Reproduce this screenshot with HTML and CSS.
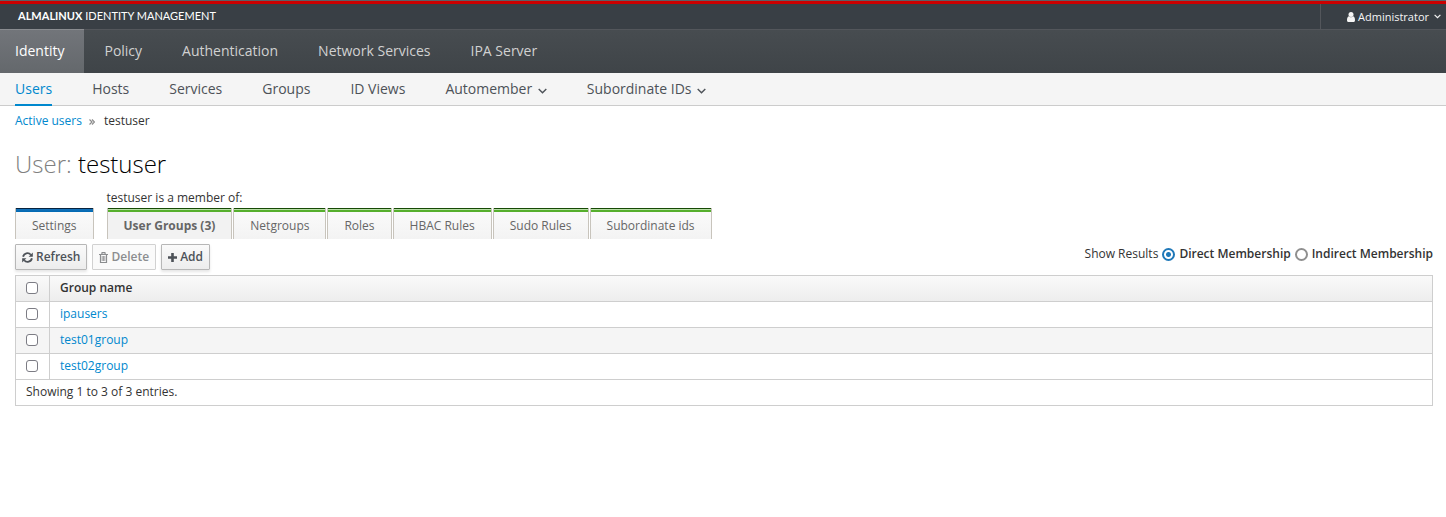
FILE: index.html
```html
<!DOCTYPE html>
<html lang="en">
<head>
    <meta charset="UTF-8">
    <meta name="viewport" content="width=device-width, initial-scale=1.0">
    <title>Identity Management</title>
    <link rel="stylesheet" href="styles.css">
</head>
<body>
    <header class="navbar">
        <div class="navbar-header">
            <a class="brand" href="#"><b>ALMALINUX</b> IDENTITY MANAGEMENT</a>
            <button type="button" class="user-menu">
                <svg class="user-icon" viewBox="0 0 8 10" width="8" height="10"><circle cx="4" cy="2.600" r="2.500" fill="currentColor"/><path d="M1.800 4.300C.5 4.800 0 6.300 0 8.200 0 9.300.6 10 1.500 10h5C7.400 10 8 9.300 8 8.200c0-1.900-.5-3.400-1.800-3.900-1.200 1.200-3.200 1.200-4.400 0z" fill="currentColor"/></svg>
                <span>Administrator</span>
                <svg class="user-caret" viewBox="0 0 7 5" width="7" height="5"><path d="M.6.8l2.900 2.900L6.400.8" fill="none" stroke="currentColor" stroke-width="1.200"/></svg>
            </button>
        </div>
        <nav class="nav-primary">
            <a class="active" href="#">Identity</a>
            <a href="#">Policy</a>
            <a href="#">Authentication</a>
            <a href="#">Network Services</a>
            <a href="#">IPA Server</a>
        </nav>
        <nav class="nav-secondary">
            <a class="active" href="#">Users</a>
            <a href="#">Hosts</a>
            <a href="#">Services</a>
            <a href="#">Groups</a>
            <a href="#">ID Views</a>
            <a href="#">Automember <svg class="caret" viewBox="0 0 9 6" width="9" height="6"><path d="M.7.9l3.800 3.800L8.300.9" fill="none" stroke="currentColor" stroke-width="1.400"/></svg></a>
            <a href="#">Subordinate IDs <svg class="caret" viewBox="0 0 9 6" width="9" height="6"><path d="M.7.9l3.800 3.800L8.300.9" fill="none" stroke="currentColor" stroke-width="1.400"/></svg></a>
        </nav>
    </header>

    <main class="content">
        <div class="breadcrumb">
            <a href="#">Active users</a>
            <svg viewBox="0 0 6 6" width="6" height="6"><path d="M.5.500L3 3 .5 5.500M3 .5L5.500 3 3 5.500" fill="none" stroke="#8c8c8c" stroke-width="1.200"/></svg>
            <span>testuser</span>
        </div>

        <h1 class="title">User: <span>testuser</span></h1>

        <div class="facets">
            <div class="facet-group settings">
                <div class="tabs">
                    <a href="#">Settings</a>
                </div>
            </div>
            <div class="facet-group">
                <div class="group-label">testuser is a member of:</div>
                <div class="tabs">
                    <a class="active" href="#">User Groups (3)</a>
                    <a href="#">Netgroups</a>
                    <a href="#">Roles</a>
                    <a href="#">HBAC Rules</a>
                    <a href="#">Sudo Rules</a>
                    <a href="#">Subordinate ids</a>
                </div>
            </div>
        </div>

        <div class="controls">
            <div class="buttons">
                <button type="button" class="btn">
                    <svg viewBox="0 0 12 12" width="11" height="11"><path d="M1.200 5.200A4.800 4.800 0 0 1 9.600 3M10.800 6.800A4.800 4.800 0 0 1 2.400 9" fill="none" stroke="currentColor" stroke-width="2"/><path d="M11.800.6v4.600H7.200zM.2 11.400V6.800h4.600z" fill="currentColor"/></svg>
                    Refresh
                </button>
                <button type="button" class="btn" disabled>
                    <svg viewBox="0 0 9 11" width="9" height="11"><path d="M0 2.500h9M2.700 2.500l.4-1.900h2.800l.4 1.900M1.500 2.500v8h6v-8" fill="none" stroke="currentColor" stroke-width="1.200"/><path d="M3.200 4v5M4.500 4v5M5.800 4v5" fill="none" stroke="currentColor" stroke-width=".8"/></svg>
                    Delete
                </button>
                <button type="button" class="btn">
                    <svg viewBox="0 0 9 9" width="9" height="9"><path d="M4.500 0v9M0 4.500h9" stroke="currentColor" stroke-width="2.600"/></svg>
                    Add
                </button>
            </div>
            <div class="results">
                <span>Show Results</span>
                <input type="radio" name="membership" id="direct" checked>
                <label for="direct">Direct Membership</label>
                <input type="radio" name="membership" id="indirect">
                <label for="indirect">Indirect Membership</label>
            </div>
        </div>

        <table class="table">
            <thead>
                <tr>
                    <th class="check"><input type="checkbox" aria-label="Select all"></th>
                    <th>Group name</th>
                </tr>
            </thead>
            <tbody>
                <tr>
                    <td class="check"><input type="checkbox" aria-label="ipausers"></td>
                    <td><a href="#">ipausers</a></td>
                </tr>
                <tr>
                    <td class="check"><input type="checkbox" aria-label="test01group"></td>
                    <td><a href="#">test01group</a></td>
                </tr>
                <tr>
                    <td class="check"><input type="checkbox" aria-label="test02group"></td>
                    <td><a href="#">test02group</a></td>
                </tr>
            </tbody>
            <tfoot>
                <tr>
                    <td colspan="2">Showing 1 to 3 of 3 entries.</td>
                </tr>
            </tfoot>
        </table>
    </main>
</body>
</html>
```
FILE: styles.css
```css
* {
    box-sizing: border-box;
}
body {
    margin: 0;
    font-family: "Open Sans", "Noto Sans", sans-serif;
    font-size: 12px;
    line-height: 20px;
    color: #333333;
    background: #ffffff;
}
a {
    color: #0088ce;
    text-decoration: none;
}

/* Navigation */
.navbar {
    border-top: 1px solid #5b6165;
}
.navbar-header {
    display: flex;
    justify-content: space-between;
    height: 28px;
    border-top: 3px solid #cc0000;
    background: #393f45;
}
.brand {
    padding: 2px 18px;
    font-family: Lato, sans-serif;
    font-size: 11px;
    color: #ffffff;
}
.user-menu {
    display: flex;
    align-items: center;
    padding: 0 5px 0 26px;
    border: 0;
    border-left: 1px solid #53565b;
    background: none;
    font: inherit;
    font-size: 11px;
    color: #f5f5f5;
}
.user-icon {
    margin-right: 3px;
}
.user-caret {
    margin-left: 5px;
}
.nav-primary {
    display: flex;
    height: 44px;
    border-top: 1px solid #53565b;
    background: linear-gradient(#474c50, #3f4448);
    font-size: 14px;
}
.nav-primary a {
    padding: 11px 20px;
    color: #d1d1d1;
}
.nav-primary a:first-child {
    padding-left: 15px;
}
.nav-primary .active {
    margin-top: -1px;
    border-top: 1px solid #8a8c90;
    background: linear-gradient(#72757a, #64686c);
    color: #ffffff;
}
.nav-secondary {
    display: flex;
    gap: 40px;
    height: 33px;
    padding: 0 15px;
    border-bottom: 1px solid #cccccc;
    background: #f5f5f5;
    font-size: 14px;
}
.nav-secondary a {
    height: 33px;
    padding-top: 6px;
    color: #4d5258;
}
.nav-secondary .active {
    border-bottom: 2px solid #0088ce;
    color: #0088ce;
}
.caret {
    margin-left: 2px;
}

/* Page */
.content {
    padding: 5px 13px 20px 15px;
}
.breadcrumb {
    display: flex;
    align-items: center;
}
.breadcrumb svg {
    margin: 2px 9px 0 7px;
}
.title {
    margin: 19px 0 10px;
    font-size: 24px;
    font-weight: 300;
    line-height: 28px;
    color: #808080;
}
.title span {
    color: #000000;
}
.facets {
    display: flex;
    align-items: flex-end;
    gap: 13px;
}
.tabs {
    display: flex;
    gap: 1px;
}
.tabs a {
    height: 31px;
    padding: 3px 16px 0;
    border: 1px solid #c8c4bc;
    border-top: 0;
    border-bottom: 0;
    background: linear-gradient(#174a06 1px, #b9dfa8 1px, #b9dfa8 2px, #56af2d 2px, #56af2d 4px, transparent 4px), linear-gradient(#fbfbfb, #f3f3f3);
    line-height: 29px;
    color: #666666;
}
.tabs .active {
    background: linear-gradient(#174a06 1px, #b9dfa8 1px, #b9dfa8 2px, #56af2d 2px, #56af2d 4px, #f2f2f2 4px);
    font-weight: 700;
}
.settings .tabs a {
    background: linear-gradient(#08243f 1px, #1670b8 1px, #006ab3 4px, transparent 4px), linear-gradient(#fbfbfb, #f3f3f3);
}

/* Buttons and filter */
.controls {
    display: flex;
    justify-content: space-between;
    align-items: flex-start;
    margin: 5px 0;
}
.buttons {
    display: flex;
    gap: 5px;
}
.btn {
    display: flex;
    align-items: center;
    gap: 3px;
    height: 26px;
    padding: 0 6px;
    border: 1px solid #b7b7b7;
    border-radius: 1px;
    background: linear-gradient(#fafafa, #ededed);
    box-shadow: 0 2px 3px rgba(3, 3, 3, 0.1);
    font: inherit;
    font-weight: 600;
    color: #4d5258;
}
.btn:disabled {
    border-color: #d1d1d1;
    background: #fafafa;
    box-shadow: none;
    color: #8b8d8f;
}
.results {
    display: flex;
    align-items: center;
    gap: 4px;
}
.results label {
    font-weight: 600;
}
input {
    appearance: none;
    flex: none;
    width: 13px;
    height: 13px;
    margin: 0;
    background: #ffffff;
}
input[type="radio"] {
    border: 2px solid #8f8f8f;
    border-radius: 50%;
}
input[type="radio"]:checked {
    border-color: #1f78b8;
    background: radial-gradient(circle, #1f78b8 2px, #ffffff 3px);
}
input[type="checkbox"] {
    display: block;
    width: 12px;
    height: 12px;
    border: 1px solid #7c7c84;
    border-radius: 3px;
}

/* Table */
.table {
    width: 100%;
    border: 1px solid #cecece;
    border-collapse: collapse;
}
.table th,
.table td {
    height: 26px;
    padding: 0 10px 2px;
    border: 1px solid #cecece;
    text-align: left;
    font-weight: 400;
}
.table th {
    font-weight: 600;
}
.table thead {
    background: linear-gradient(#fafafa, #ededed);
}
.table .check {
    width: 34px;
}
.table tbody tr:nth-child(even) {
    background: #f5f5f5;
}
```
